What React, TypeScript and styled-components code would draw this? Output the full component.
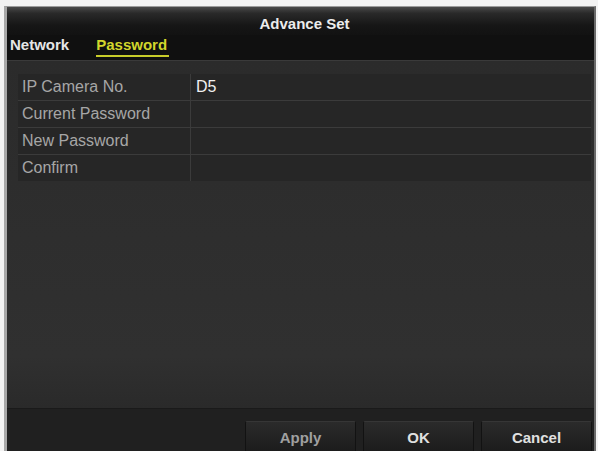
import React from "react";
import styled, { createGlobalStyle } from "styled-components";

const GlobalStyle = createGlobalStyle`
    html, body {
        margin: 0;
        padding: 0;
        background: #f3f3f3;
        font-family: "Liberation Sans", Arial, sans-serif;
    }
`

const rows = [
    { label: "IP Camera No.", value: "D5" },
    { label: "Current Password", value: "" },
    { label: "New Password", value: "" },
    { label: "Confirm", value: "" },
]

const App = () => {
    return (
        <>
            <GlobalStyle />
            <Dialog>
                <TitleBar>Advance Set</TitleBar>
                <TabBar>
                    <Tab>Network</Tab>
                    <Tab active>Password</Tab>
                </TabBar>
                <Content>
                    <Table>
                        {rows.map((row) => (
                            <React.Fragment key={row.label}>
                                <LabelCell>{row.label}</LabelCell>
                                <ValueCell>{row.value}</ValueCell>
                            </React.Fragment>
                        ))}
                    </Table>
                </Content>
                <Footer>
                    <Button dim>Apply</Button>
                    <Button>OK</Button>
                    <Button>Cancel</Button>
                </Footer>
            </Dialog>
        </>
    )
}

export default App;

const Dialog = styled.div`
    margin: 6px 2px 0 4px;
    height: 445px;
    box-sizing: border-box;
    border-top: 1px solid #9c9c9c;
    border-left: 3px solid #a8a8a8;
    border-right: 2px solid #6a6a6a;
    display: flex;
    flex-direction: column;
    overflow: hidden;
    background: #2d2d2d;
`

const TitleBar = styled.div`
    height: 28px;
    flex-shrink: 0;
    box-sizing: border-box;
    display: flex;
    align-items: flex-end;
    justify-content: center;
    padding: 0 0 3px 8px;
    background: linear-gradient(#4a4a4a 0%, #2a2a2a 22%, #161616 65%, #121212 100%);
    color: #ececec;
    font-size: 15px;
    font-weight: bold;
`

const TabBar = styled.div`
    height: 25px;
    flex-shrink: 0;
    display: flex;
    align-items: flex-end;
    gap: 25px;
    padding: 0 0 0 3px;
    background: #101010;
`

const Tab = styled.div<{ active?: boolean }>`
    font-size: 15px;
    font-weight: bold;
    line-height: 18px;
    padding: 0 2px 1px 0;
    margin-bottom: 3px;
    color: ${(p) => (p.active ? "#d2d62c" : "#e6e6e6")};
    border-bottom: 2px solid ${(p) => (p.active ? "#c8cc2a" : "transparent")};
`

const Content = styled.div`
    flex: 1;
    padding: 13px 3px 0 11px;
    border-top: 1px solid #3a3a3a;
    background: linear-gradient(#2b2b2b 0%, #303030 85%, #2a2a2a 100%);
`

const Table = styled.div`
    display: grid;
    grid-template-columns: 172px 1fr;
    grid-auto-rows: 26px;
    gap: 1px;
    background: #3b3b3b;
`

const LabelCell = styled.div`
    background: #262626;
    color: #a6a6a6;
    font-size: 16px;
    display: flex;
    align-items: center;
    padding-left: 4px;
`

const ValueCell = styled.div`
    background: #262626;
    color: #f0f0f0;
    font-size: 16px;
    display: flex;
    align-items: center;
    padding-left: 5px;
`

const Footer = styled.div`
    height: 43px;
    flex-shrink: 0;
    display: flex;
    justify-content: flex-end;
    align-items: flex-start;
    gap: 7px;
    padding: 12px 2px 0 0;
    box-sizing: border-box;
    background: #202020;
    border-top: 1px solid #1a1a1a;
`

const Button = styled.div<{ dim?: boolean }>`
    width: 111px;
    height: 34px;
    flex-shrink: 0;
    box-sizing: border-box;
    display: flex;
    align-items: flex-start;
    justify-content: center;
    padding-top: 7px;
    border: 1px solid #121212;
    border-top-color: #363636;
    border-radius: 2px;
    background: linear-gradient(#2b2b2b, #1b1b1b);
    color: ${(p) => (p.dim ? "#a0a0a0" : "#e0e0e0")};
    font-size: 15px;
    font-weight: bold;
`
